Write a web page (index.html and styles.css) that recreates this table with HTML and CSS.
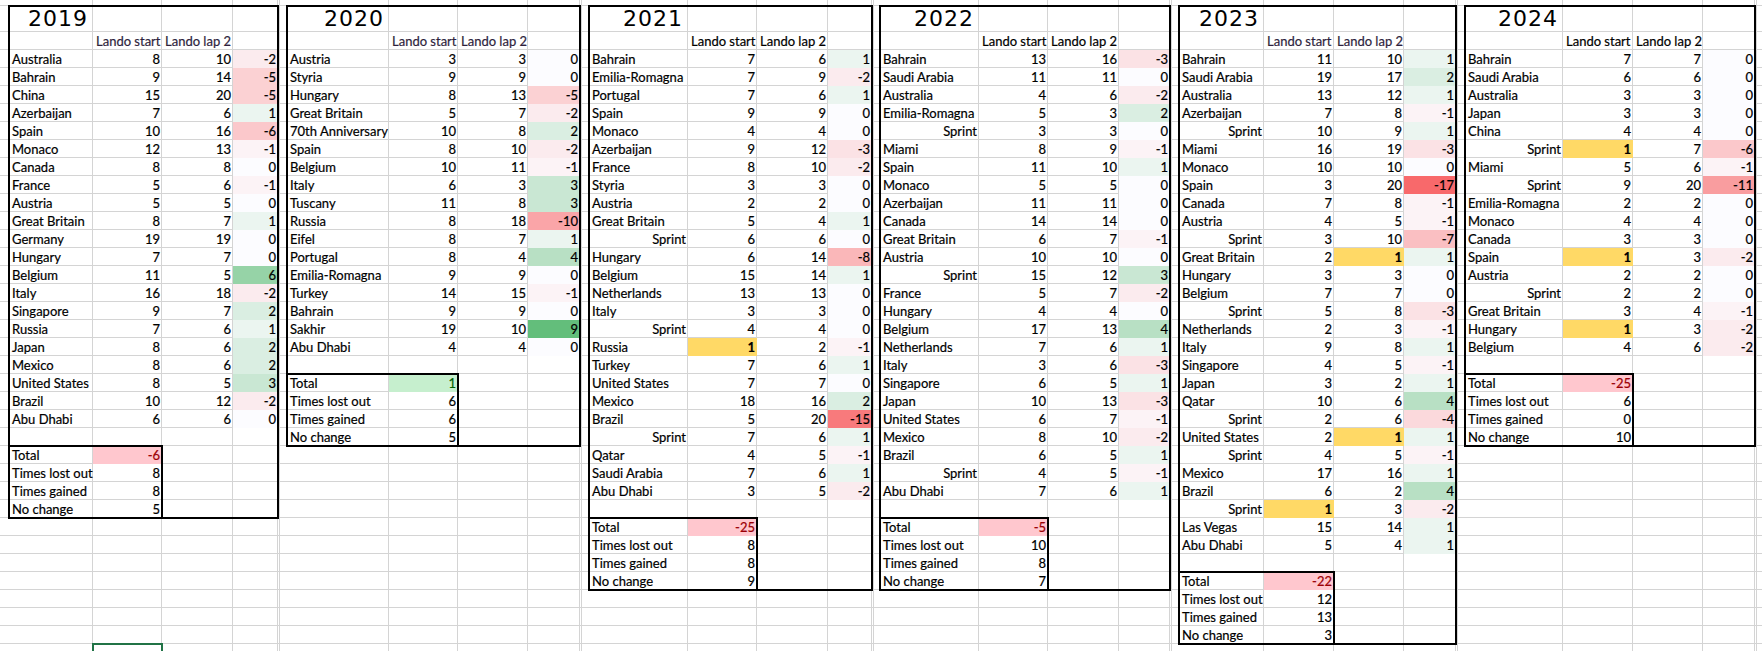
FILE: index.html
```html
<!DOCTYPE html>
<html lang="en">
<head>
<meta charset="utf-8">
<title>Lando start vs lap 2</title>
<link rel="stylesheet" href="styles.css">
</head>
<body>
<main class="sheet">
  <div class="gap first"></div>

  <section class="strip y2019">
    <div class="block">
      <div class="yr">2019</div><div class="span3"></div>
      <div></div><div class="hd pu">Lando start</div><div class="hd pu">Lando lap 2</div><div></div>
      <div>Australia</div><div class="n">8</div><div class="n">10</div><div class="n m2">-2</div>
      <div>Bahrain</div><div class="n">9</div><div class="n">14</div><div class="n m5">-5</div>
      <div>China</div><div class="n">15</div><div class="n">20</div><div class="n m5">-5</div>
      <div>Azerbaijan</div><div class="n">7</div><div class="n">6</div><div class="n p1">1</div>
      <div>Spain</div><div class="n">10</div><div class="n">16</div><div class="n m6">-6</div>
      <div>Monaco</div><div class="n">12</div><div class="n">13</div><div class="n m1">-1</div>
      <div>Canada</div><div class="n">8</div><div class="n">8</div><div class="n z">0</div>
      <div>France</div><div class="n">5</div><div class="n">6</div><div class="n m1">-1</div>
      <div>Austria</div><div class="n">5</div><div class="n">5</div><div class="n z">0</div>
      <div>Great Britain</div><div class="n">8</div><div class="n">7</div><div class="n p1">1</div>
      <div>Germany</div><div class="n">19</div><div class="n">19</div><div class="n z">0</div>
      <div>Hungary</div><div class="n">7</div><div class="n">7</div><div class="n z">0</div>
      <div>Belgium</div><div class="n">11</div><div class="n">5</div><div class="n p6">6</div>
      <div>Italy</div><div class="n">16</div><div class="n">18</div><div class="n m2">-2</div>
      <div>Singapore</div><div class="n">9</div><div class="n">7</div><div class="n p2">2</div>
      <div>Russia</div><div class="n">7</div><div class="n">6</div><div class="n p1">1</div>
      <div>Japan</div><div class="n">8</div><div class="n">6</div><div class="n p2">2</div>
      <div>Mexico</div><div class="n">8</div><div class="n">6</div><div class="n p2">2</div>
      <div>United States</div><div class="n">8</div><div class="n">5</div><div class="n p3">3</div>
      <div>Brazil</div><div class="n">10</div><div class="n">12</div><div class="n m2">-2</div>
      <div>Abu Dhabi</div><div class="n">6</div><div class="n">6</div><div class="n z">0</div>
      <div class="full"></div>
      <div class="summary">
        <div>Total</div><div class="n tneg">-6</div>
        <div>Times lost out</div><div class="n">8</div>
        <div>Times gained</div><div class="n">8</div>
        <div>No change</div><div class="n">5</div>
      </div>
    </div>
    <div class="active"></div>
  </section>

  <div class="gap"></div>

  <section class="strip y2020">
    <div class="block">
      <div class="yr">2020</div><div class="span3"></div>
      <div></div><div class="hd pu">Lando start</div><div class="hd pu">Lando lap 2</div><div></div>
      <div>Austria</div><div class="n">3</div><div class="n">3</div><div class="n z">0</div>
      <div>Styria</div><div class="n">9</div><div class="n">9</div><div class="n z">0</div>
      <div>Hungary</div><div class="n">8</div><div class="n">13</div><div class="n m5">-5</div>
      <div>Great Britain</div><div class="n">5</div><div class="n">7</div><div class="n m2">-2</div>
      <div>70th Anniversary</div><div class="n">10</div><div class="n">8</div><div class="n p2">2</div>
      <div>Spain</div><div class="n">8</div><div class="n">10</div><div class="n m2">-2</div>
      <div>Belgium</div><div class="n">10</div><div class="n">11</div><div class="n m1">-1</div>
      <div>Italy</div><div class="n">6</div><div class="n">3</div><div class="n p3">3</div>
      <div>Tuscany</div><div class="n">11</div><div class="n">8</div><div class="n p3">3</div>
      <div>Russia</div><div class="n">8</div><div class="n">18</div><div class="n m10">-10</div>
      <div>Eifel</div><div class="n">8</div><div class="n">7</div><div class="n p1">1</div>
      <div>Portugal</div><div class="n">8</div><div class="n">4</div><div class="n p4">4</div>
      <div>Emilia-Romagna</div><div class="n">9</div><div class="n">9</div><div class="n z">0</div>
      <div>Turkey</div><div class="n">14</div><div class="n">15</div><div class="n m1">-1</div>
      <div>Bahrain</div><div class="n">9</div><div class="n">9</div><div class="n z">0</div>
      <div>Sakhir</div><div class="n">19</div><div class="n">10</div><div class="n p9">9</div>
      <div>Abu Dhabi</div><div class="n">4</div><div class="n">4</div><div class="n z">0</div>
      <div class="full"></div>
      <div class="summary">
        <div>Total</div><div class="n tpos">1</div>
        <div>Times lost out</div><div class="n">6</div>
        <div>Times gained</div><div class="n">6</div>
        <div>No change</div><div class="n">5</div>
      </div>
    </div>
  </section>

  <div class="gap"></div>

  <section class="strip y2021">
    <div class="block">
      <div class="yr">2021</div><div class="span3"></div>
      <div></div><div class="hd">Lando start</div><div class="hd">Lando lap 2</div><div></div>
      <div>Bahrain</div><div class="n">7</div><div class="n">6</div><div class="n p1">1</div>
      <div>Emilia-Romagna</div><div class="n">7</div><div class="n">9</div><div class="n m2">-2</div>
      <div>Portugal</div><div class="n">7</div><div class="n">6</div><div class="n p1">1</div>
      <div>Spain</div><div class="n">9</div><div class="n">9</div><div class="n z">0</div>
      <div>Monaco</div><div class="n">4</div><div class="n">4</div><div class="n z">0</div>
      <div>Azerbaijan</div><div class="n">9</div><div class="n">12</div><div class="n m3">-3</div>
      <div>France</div><div class="n">8</div><div class="n">10</div><div class="n m2">-2</div>
      <div>Styria</div><div class="n">3</div><div class="n">3</div><div class="n z">0</div>
      <div>Austria</div><div class="n">2</div><div class="n">2</div><div class="n z">0</div>
      <div>Great Britain</div><div class="n">5</div><div class="n">4</div><div class="n p1">1</div>
      <div class="sp">Sprint</div><div class="n">6</div><div class="n">6</div><div class="n z">0</div>
      <div>Hungary</div><div class="n">6</div><div class="n">14</div><div class="n m8">-8</div>
      <div>Belgium</div><div class="n">15</div><div class="n">14</div><div class="n p1">1</div>
      <div>Netherlands</div><div class="n">13</div><div class="n">13</div><div class="n z">0</div>
      <div>Italy</div><div class="n">3</div><div class="n">3</div><div class="n z">0</div>
      <div class="sp">Sprint</div><div class="n">4</div><div class="n">4</div><div class="n z">0</div>
      <div>Russia</div><div class="n pole">1</div><div class="n">2</div><div class="n m1">-1</div>
      <div>Turkey</div><div class="n">7</div><div class="n">6</div><div class="n p1">1</div>
      <div>United States</div><div class="n">7</div><div class="n">7</div><div class="n z">0</div>
      <div>Mexico</div><div class="n">18</div><div class="n">16</div><div class="n p2">2</div>
      <div>Brazil</div><div class="n">5</div><div class="n">20</div><div class="n m15">-15</div>
      <div class="sp">Sprint</div><div class="n">7</div><div class="n">6</div><div class="n p1">1</div>
      <div>Qatar</div><div class="n">4</div><div class="n">5</div><div class="n m1">-1</div>
      <div>Saudi Arabia</div><div class="n">7</div><div class="n">6</div><div class="n p1">1</div>
      <div>Abu Dhabi</div><div class="n">3</div><div class="n">5</div><div class="n m2">-2</div>
      <div class="full"></div>
      <div class="summary">
        <div>Total</div><div class="n tneg">-25</div>
        <div>Times lost out</div><div class="n">8</div>
        <div>Times gained</div><div class="n">8</div>
        <div>No change</div><div class="n">9</div>
      </div>
    </div>
  </section>

  <div class="gap narrow"></div>

  <section class="strip y2022">
    <div class="block">
      <div class="yr">2022</div><div class="span3"></div>
      <div></div><div class="hd">Lando start</div><div class="hd">Lando lap 2</div><div></div>
      <div>Bahrain</div><div class="n">13</div><div class="n">16</div><div class="n m3">-3</div>
      <div>Saudi Arabia</div><div class="n">11</div><div class="n">11</div><div class="n z">0</div>
      <div>Australia</div><div class="n">4</div><div class="n">6</div><div class="n m2">-2</div>
      <div>Emilia-Romagna</div><div class="n">5</div><div class="n">3</div><div class="n p2">2</div>
      <div class="sp">Sprint</div><div class="n">3</div><div class="n">3</div><div class="n z">0</div>
      <div>Miami</div><div class="n">8</div><div class="n">9</div><div class="n m1">-1</div>
      <div>Spain</div><div class="n">11</div><div class="n">10</div><div class="n p1">1</div>
      <div>Monaco</div><div class="n">5</div><div class="n">5</div><div class="n z">0</div>
      <div>Azerbaijan</div><div class="n">11</div><div class="n">11</div><div class="n z">0</div>
      <div>Canada</div><div class="n">14</div><div class="n">14</div><div class="n z">0</div>
      <div>Great Britain</div><div class="n">6</div><div class="n">7</div><div class="n m1">-1</div>
      <div>Austria</div><div class="n">10</div><div class="n">10</div><div class="n z">0</div>
      <div class="sp">Sprint</div><div class="n">15</div><div class="n">12</div><div class="n p3">3</div>
      <div>France</div><div class="n">5</div><div class="n">7</div><div class="n m2">-2</div>
      <div>Hungary</div><div class="n">4</div><div class="n">4</div><div class="n z">0</div>
      <div>Belgium</div><div class="n">17</div><div class="n">13</div><div class="n p4">4</div>
      <div>Netherlands</div><div class="n">7</div><div class="n">6</div><div class="n p1">1</div>
      <div>Italy</div><div class="n">3</div><div class="n">6</div><div class="n m3">-3</div>
      <div>Singapore</div><div class="n">6</div><div class="n">5</div><div class="n p1">1</div>
      <div>Japan</div><div class="n">10</div><div class="n">13</div><div class="n m3">-3</div>
      <div>United States</div><div class="n">6</div><div class="n">7</div><div class="n m1">-1</div>
      <div>Mexico</div><div class="n">8</div><div class="n">10</div><div class="n m2">-2</div>
      <div>Brazil</div><div class="n">6</div><div class="n">5</div><div class="n p1">1</div>
      <div class="sp">Sprint</div><div class="n">4</div><div class="n">5</div><div class="n m1">-1</div>
      <div>Abu Dhabi</div><div class="n">7</div><div class="n">6</div><div class="n p1">1</div>
      <div class="full"></div>
      <div class="summary">
        <div>Total</div><div class="n tneg">-5</div>
        <div>Times lost out</div><div class="n">10</div>
        <div>Times gained</div><div class="n">8</div>
        <div>No change</div><div class="n">7</div>
      </div>
    </div>
  </section>

  <div class="gap"></div>

  <section class="strip y2023">
    <div class="block">
      <div class="yr">2023</div><div class="span3"></div>
      <div></div><div class="hd pu">Lando start</div><div class="hd pu">Lando lap 2</div><div></div>
      <div>Bahrain</div><div class="n">11</div><div class="n">10</div><div class="n p1">1</div>
      <div>Saudi Arabia</div><div class="n">19</div><div class="n">17</div><div class="n p2">2</div>
      <div>Australia</div><div class="n">13</div><div class="n">12</div><div class="n p1">1</div>
      <div>Azerbaijan</div><div class="n">7</div><div class="n">8</div><div class="n m1">-1</div>
      <div class="sp">Sprint</div><div class="n">10</div><div class="n">9</div><div class="n p1">1</div>
      <div>Miami</div><div class="n">16</div><div class="n">19</div><div class="n m3">-3</div>
      <div>Monaco</div><div class="n">10</div><div class="n">10</div><div class="n z">0</div>
      <div>Spain</div><div class="n">3</div><div class="n">20</div><div class="n m17">-17</div>
      <div>Canada</div><div class="n">7</div><div class="n">8</div><div class="n m1">-1</div>
      <div>Austria</div><div class="n">4</div><div class="n">5</div><div class="n m1">-1</div>
      <div class="sp">Sprint</div><div class="n">3</div><div class="n">10</div><div class="n m7">-7</div>
      <div>Great Britain</div><div class="n">2</div><div class="n pole">1</div><div class="n p1">1</div>
      <div>Hungary</div><div class="n">3</div><div class="n">3</div><div class="n z">0</div>
      <div>Belgium</div><div class="n">7</div><div class="n">7</div><div class="n z">0</div>
      <div class="sp">Sprint</div><div class="n">5</div><div class="n">8</div><div class="n m3">-3</div>
      <div>Netherlands</div><div class="n">2</div><div class="n">3</div><div class="n m1">-1</div>
      <div>Italy</div><div class="n">9</div><div class="n">8</div><div class="n p1">1</div>
      <div>Singapore</div><div class="n">4</div><div class="n">5</div><div class="n m1">-1</div>
      <div>Japan</div><div class="n">3</div><div class="n">2</div><div class="n p1">1</div>
      <div>Qatar</div><div class="n">10</div><div class="n">6</div><div class="n p4">4</div>
      <div class="sp">Sprint</div><div class="n">2</div><div class="n">6</div><div class="n m4">-4</div>
      <div>United States</div><div class="n">2</div><div class="n pole">1</div><div class="n p1">1</div>
      <div class="sp">Sprint</div><div class="n">4</div><div class="n">5</div><div class="n m1">-1</div>
      <div>Mexico</div><div class="n">17</div><div class="n">16</div><div class="n p1">1</div>
      <div>Brazil</div><div class="n">6</div><div class="n">2</div><div class="n p4">4</div>
      <div class="sp">Sprint</div><div class="n pole">1</div><div class="n">3</div><div class="n m2">-2</div>
      <div>Las Vegas</div><div class="n">15</div><div class="n">14</div><div class="n p1">1</div>
      <div>Abu Dhabi</div><div class="n">5</div><div class="n">4</div><div class="n p1">1</div>
      <div class="full"></div>
      <div class="summary">
        <div>Total</div><div class="n tneg">-22</div>
        <div>Times lost out</div><div class="n">12</div>
        <div>Times gained</div><div class="n">13</div>
        <div>No change</div><div class="n">3</div>
      </div>
    </div>
  </section>

  <div class="gap"></div>

  <section class="strip y2024">
    <div class="block">
      <div class="yr">2024</div><div class="span3"></div>
      <div></div><div class="hd">Lando start</div><div class="hd">Lando lap 2</div><div></div>
      <div>Bahrain</div><div class="n">7</div><div class="n">7</div><div class="n z">0</div>
      <div>Saudi Arabia</div><div class="n">6</div><div class="n">6</div><div class="n z">0</div>
      <div>Australia</div><div class="n">3</div><div class="n">3</div><div class="n z">0</div>
      <div>Japan</div><div class="n">3</div><div class="n">3</div><div class="n z">0</div>
      <div>China</div><div class="n">4</div><div class="n">4</div><div class="n z">0</div>
      <div class="sp">Sprint</div><div class="n pole">1</div><div class="n">7</div><div class="n m6">-6</div>
      <div>Miami</div><div class="n">5</div><div class="n">6</div><div class="n m1">-1</div>
      <div class="sp">Sprint</div><div class="n">9</div><div class="n">20</div><div class="n m11">-11</div>
      <div>Emilia-Romagna</div><div class="n">2</div><div class="n">2</div><div class="n z">0</div>
      <div>Monaco</div><div class="n">4</div><div class="n">4</div><div class="n z">0</div>
      <div>Canada</div><div class="n">3</div><div class="n">3</div><div class="n z">0</div>
      <div>Spain</div><div class="n pole">1</div><div class="n">3</div><div class="n m2">-2</div>
      <div>Austria</div><div class="n">2</div><div class="n">2</div><div class="n z">0</div>
      <div class="sp">Sprint</div><div class="n">2</div><div class="n">2</div><div class="n z">0</div>
      <div>Great Britain</div><div class="n">3</div><div class="n">4</div><div class="n m1">-1</div>
      <div>Hungary</div><div class="n pole">1</div><div class="n">3</div><div class="n m2">-2</div>
      <div>Belgium</div><div class="n">4</div><div class="n">6</div><div class="n m2">-2</div>
      <div class="full"></div>
      <div class="summary">
        <div>Total</div><div class="n tneg">-25</div>
        <div>Times lost out</div><div class="n">6</div>
        <div>Times gained</div><div class="n">0</div>
        <div>No change</div><div class="n">10</div>
      </div>
    </div>
  </section>

  <div class="gap end"></div>
</main>
</body>
</html>
```

FILE: styles.css
```css
:root {
  --g: #d4d4d4;
}

html, body {
  margin: 0;
  padding: 0;
  background: #ffffff;
}

body {
  width: 1762px;
  height: 651px;
  overflow: hidden;
  font-family: Lato, "Liberation Sans", Arial, sans-serif;
  font-size: 13px;
  color: #000000;
  -webkit-text-stroke: 0.2px currentColor;
}

.sheet {
  display: flex;
  height: 651px;
  background:
    linear-gradient(var(--g), var(--g)) 0 5px / 100% 1px no-repeat,
    linear-gradient(var(--g), var(--g)) 0 31px / 100% 1px no-repeat,
    repeating-linear-gradient(to bottom, transparent 0 17px, var(--g) 17px 18px) 0 32px / 100% 619px no-repeat;
}

.gap {
  flex: 0 0 9px;
  background: linear-gradient(var(--g), var(--g)) 1px 0 / 1px 100% no-repeat;
}

.gap.first {
  background: none;
}

.gap.narrow {
  flex-basis: 8px;
}

.gap.end {
  flex: 1 1 auto;
}

.strip {
  flex: 0 0 auto;
  width: calc(var(--a) + var(--b) + var(--c) + var(--d));
  box-sizing: border-box;
  padding-top: 6px;
  display: flex;
  flex-direction: column;
  background:
    linear-gradient(var(--g), var(--g)) calc(var(--a) - 1px) 0 / 1px 100% no-repeat,
    linear-gradient(var(--g), var(--g)) calc(var(--a) + var(--b) - 1px) 0 / 1px 100% no-repeat,
    linear-gradient(var(--g), var(--g)) calc(var(--a) + var(--b) + var(--c) - 1px) 0 / 1px 100% no-repeat,
    linear-gradient(var(--g), var(--g)) right top / 1px 100% no-repeat;
}

.y2019 { --a: 84px; --b: 69px; --c: 71px; --d: 45px; }
.y2020 { --a: 102px; --b: 69px; --c: 70px; --d: 52px; }
.y2021 { --a: 99px; --b: 69px; --c: 71px; --d: 44px; }
.y2022 { --a: 99px; --b: 69px; --c: 71px; --d: 51px; }
.y2023 { --a: 85px; --b: 70px; --c: 70px; --d: 52px; }
.y2024 { --a: 98px; --b: 70px; --c: 70px; --d: 52px; }

.block {
  display: grid;
  grid-template-columns: var(--a) var(--b) var(--c) var(--d);
  grid-template-rows: 26px;
  grid-auto-rows: 18px;
  outline: 2px solid #000000;
  outline-offset: -1px;
}

.block > div,
.summary > div {
  line-height: 18px;
  padding: 0 2px 0 3px;
  white-space: nowrap;
}

.block > .summary {
  grid-column: 1 / span 2;
  grid-row: span 4;
  display: grid;
  grid-template-columns: var(--a) var(--b);
  grid-auto-rows: 18px;
  padding: 0;
  outline: 2px solid #000000;
  outline-offset: -1px;
}

.block > .yr {
  font-family: "DejaVu Sans", sans-serif;
  font-size: 22px;
  line-height: 26px;
  letter-spacing: 1px;
  text-align: right;
  padding-right: 5px;
  color: #000000;
  -webkit-text-stroke: 0;
}

.span3 {
  grid-column: span 3;
}

.full {
  grid-column: 1 / -1;
}

.hd {
  text-align: left;
}

.hd.pu {
  color: #2e1f3d;
}

.n,
.sp {
  text-align: right;
}

.pole {
  background: #ffd966;
  font-weight: 700;
}

.tneg {
  background: #ffc7ce;
  color: #9c0006;
}

.tpos {
  background: #c6efce;
  color: #006100;
}

.z   { background: #fcfcff; }
.m1  { background: #fcf3f6; }
.m2  { background: #fbebee; }
.m3  { background: #fbe2e5; }
.m4  { background: #fbd9dc; }
.m5  { background: #fbd1d3; }
.m6  { background: #fbc8cb; }
.m7  { background: #fabfc2; }
.m8  { background: #fab7b9; }
.m10 { background: #faa5a8; }
.m11 { background: #f99d9f; }
.m15 { background: #f87a7c; }
.m17 { background: #f8696b; }
.p1  { background: #ebf5f0; }
.p2  { background: #daeee2; }
.p3  { background: #c9e7d3; }
.p4  { background: #b8e0c4; }
.p6  { background: #96d3a7; }
.p9  { background: #63be7b; }

.active {
  flex: none;
  box-sizing: border-box;
  width: var(--b);
  height: 18px;
  margin: 126px 0 0 var(--a);
  outline: 2px solid #217346;
  outline-offset: -1px;
}
```
